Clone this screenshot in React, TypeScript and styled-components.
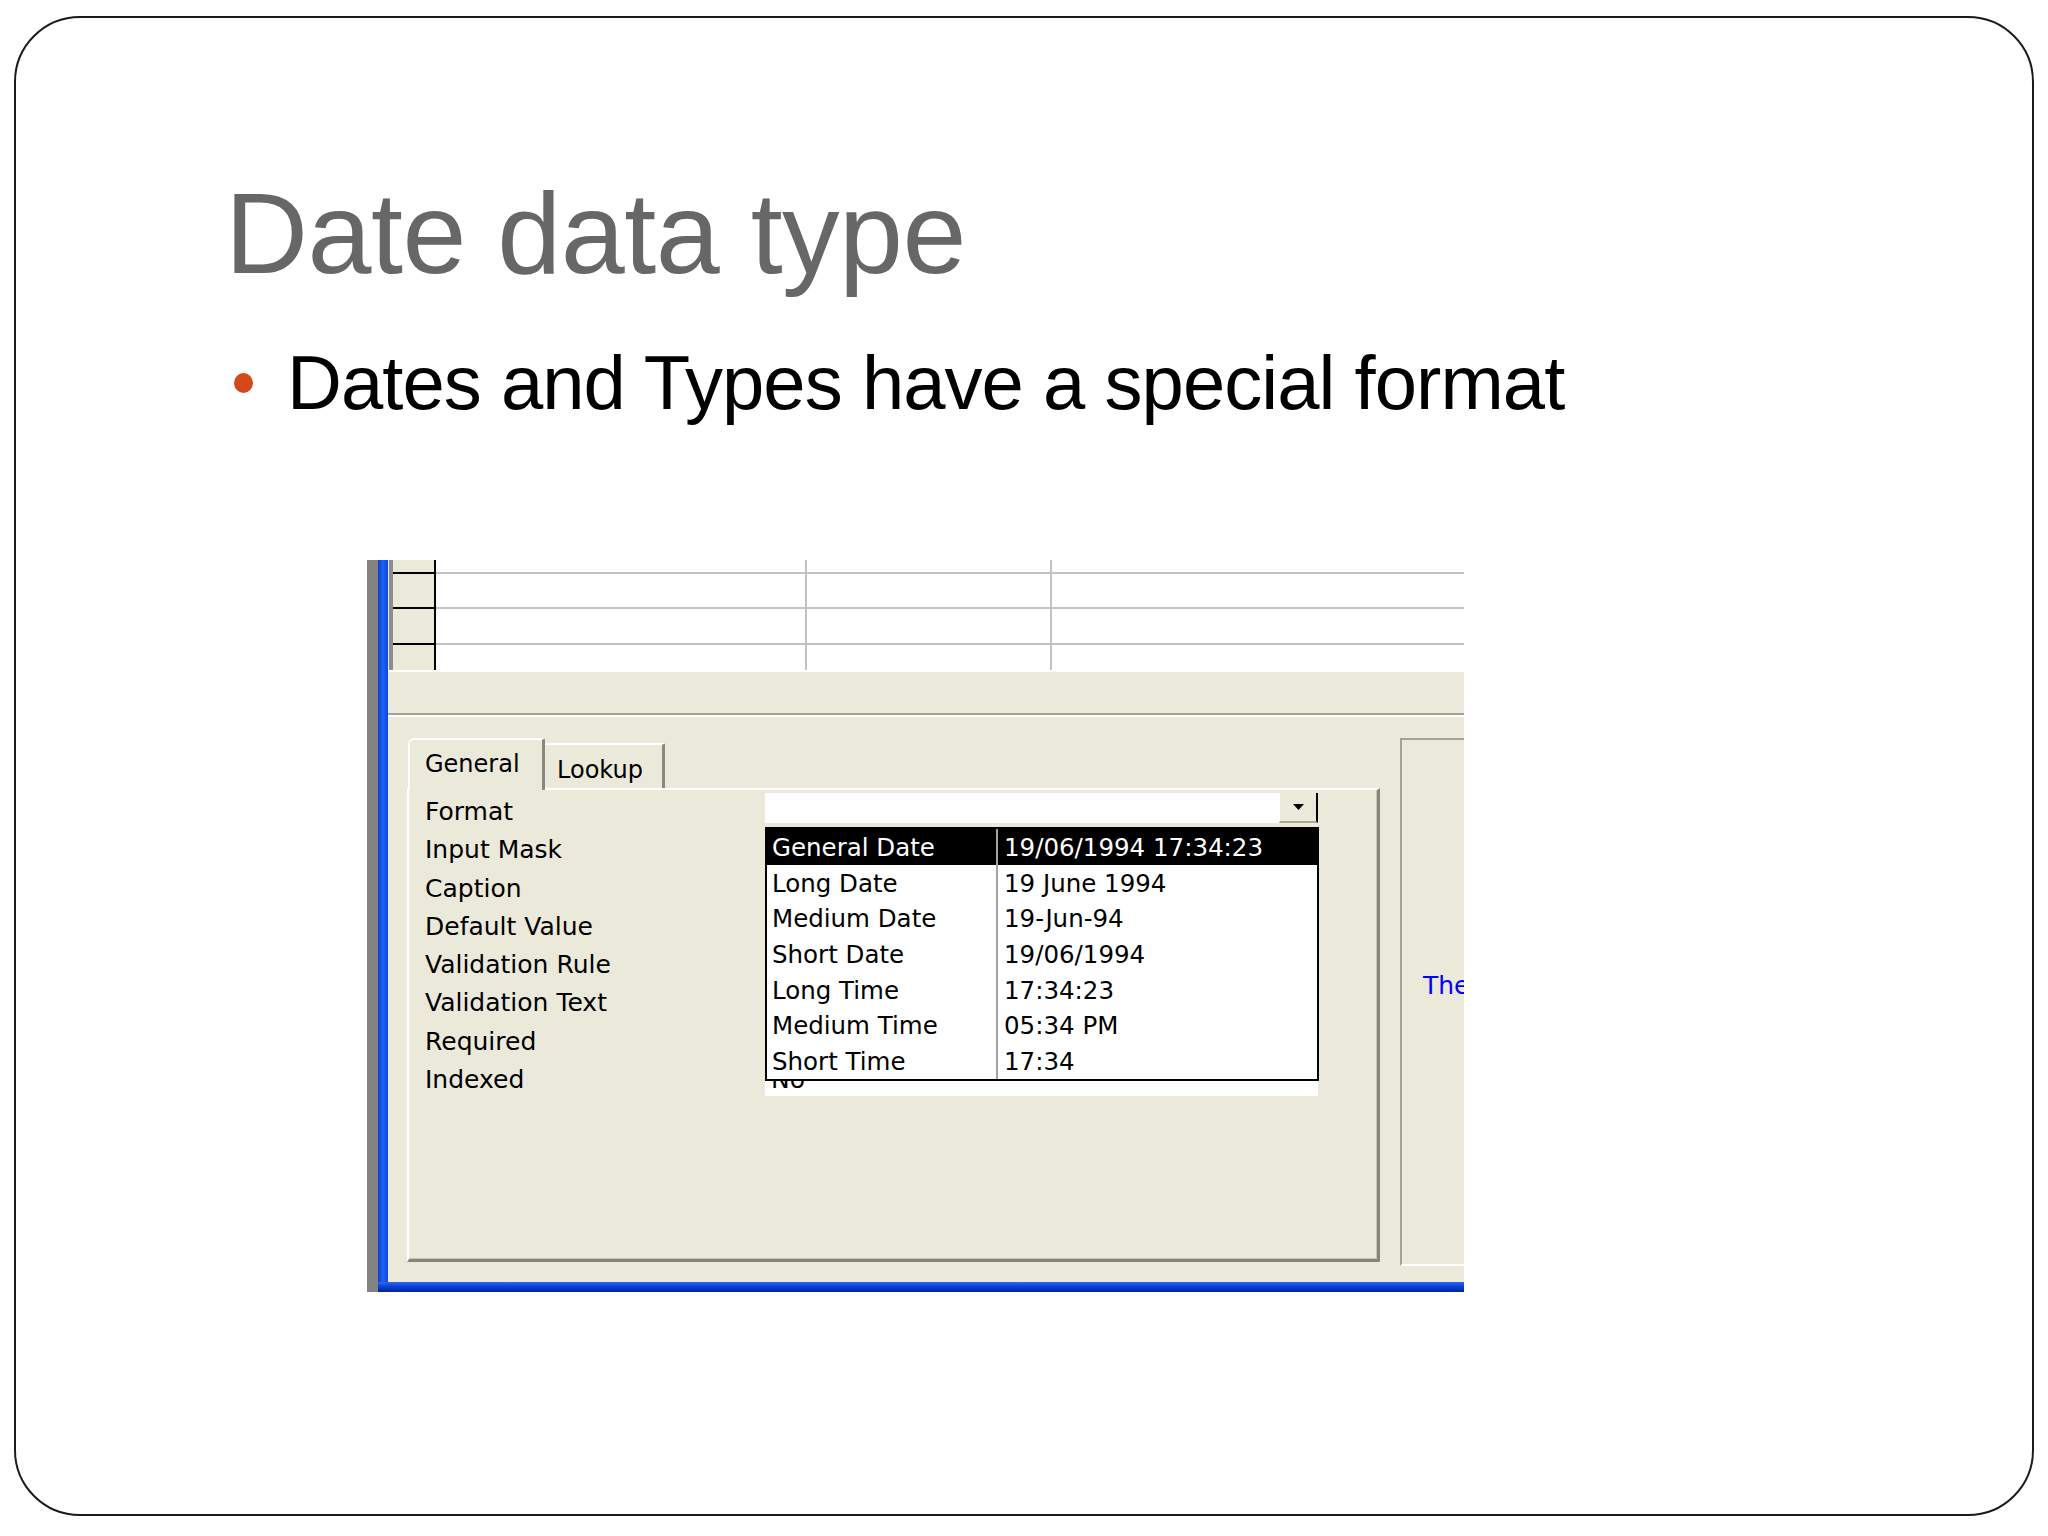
import React from "react";
import styled, { createGlobalStyle } from "styled-components";

const Global = createGlobalStyle`
  html, body {
    margin: 0;
    padding: 0;
    background: #ffffff;
  }
  body {
    width: 2048px;
    height: 1536px;
    overflow: hidden;
  }
  * { box-sizing: border-box; }
`;

const Slide = styled.div`
  margin: 16px 14px 0 14px;
  width: 2020px;
  height: 1500px;
  border: 2px solid #1b1b1b;
  border-radius: 66px;
  background: #ffffff;
  padding: 158px 0 0 201px;
  display: flex;
  flex-direction: column;
`;

const Title = styled.h1`
  margin: 0 0 0 8px;
  font-family: "Liberation Sans", Arial, sans-serif;
  font-weight: 400;
  font-size: 115px;
  line-height: 115px;
  color: #676767;
  letter-spacing: -0.5px;
`;

const BulletRow = styled.div`
  margin-top: 55px;
  padding-left: 17px;
  display: flex;
  align-items: center;
  gap: 34px;
`;

const Dot = styled.span`
  width: 19px;
  height: 20px;
  border-radius: 50%;
  background: #d4491a;
  flex: none;
`;

const BulletText = styled.p`
  margin: 0;
  font-family: "Liberation Sans", Arial, sans-serif;
  font-size: 76px;
  line-height: 74px;
  letter-spacing: -0.95px;
  color: #000;
`;

const Screenshot = styled.div`
  margin: 140px 0 0 150px;
  width: 1097px;
  height: 732px;
  display: flex;
  overflow: hidden;
  font-family: "DejaVu Sans", Verdana, sans-serif;
`;

const GrayEdge = styled.div`
  width: 11px;
  flex: none;
  background: #838383;
`;

const Window = styled.div`
  flex: 1;
  min-width: 0;
  display: flex;
  flex-direction: column;
`;

const WindowBody = styled.div`
  flex: 1;
  min-height: 0;
  display: flex;
`;

const BlueEdge = styled.div`
  width: 10px;
  flex: none;
  background: linear-gradient(to right, #0a3ccc, #1f62f2 50%, #0b46da);
`;

const BottomBand = styled.div`
  height: 10px;
  flex: none;
  background: linear-gradient(to bottom, #2c68f2, #0b42d6 45%, #00259a);
`;

const Inner = styled.div`
  flex: 1;
  min-width: 0;
  display: flex;
  flex-direction: column;
  background: #ebe9da;
`;

const DataGrid = styled.div`
  height: 110px;
  flex: none;
  margin-left: 1px;
  border-left: 4px solid #8d8d8d;
  display: flex;
  flex-direction: column;
`;

const GridRow = styled.div<{ $h: number }>`
  height: ${(p) => p.$h}px;
  flex: none;
  display: flex;
`;

const HeaderCell = styled.div<{ $last?: boolean }>`
  width: 43px;
  flex: none;
  background: #ebe9da;
  border-right: 2px solid #000;
  border-bottom: ${(p) => (p.$last ? "none" : "2px solid #000")};
`;

const DataCell = styled.div<{ $w?: number; $last?: boolean; $end?: boolean }>`
  ${(p) => (p.$w ? `width: ${p.$w}px; flex: none;` : "flex: 1;")}
  background: #ffffff;
  border-right: ${(p) => (p.$end ? "none" : "2px solid #c2c2c2")};
  border-bottom: ${(p) => (p.$last ? "none" : "2px solid #c2c2c2")};
`;

const Splitter = styled.div`
  height: 45px;
  flex: none;
  border-top: 2px solid #ffffff;
  border-bottom: 2px solid #a3a297;
`;

const DesignArea = styled.div`
  flex: 1;
  min-height: 0;
  border-top: 2px solid #ffffff;
  padding: 21px 0 20px 19px;
  display: flex;
`;

const TabColumn = styled.div`
  width: 973px;
  flex: none;
  display: flex;
  flex-direction: column;
`;

const TabStrip = styled.div`
  height: 50px;
  flex: none;
  display: flex;
  align-items: flex-end;
  padding-left: 1px;
  position: relative;
  z-index: 1;
`;

const Tab = styled.div<{ $active?: boolean }>`
  height: ${(p) => (p.$active ? 52 : 45)}px;
  width: ${(p) => (p.$active ? 137 : 120)}px;
  margin-bottom: ${(p) => (p.$active ? -2 : 0)}px;
  background: #ebe9da;
  border-top: 2px solid #ffffff;
  border-left: ${(p) => (p.$active ? "2px solid #ffffff" : "none")};
  border-right: 3px solid #8a897c;
  border-top-left-radius: ${(p) => (p.$active ? 6 : 2)}px;
  border-top-right-radius: 2px;
  padding: ${(p) => (p.$active ? "10px 0 0 15px" : "11px 0 0 12px")};
  font-size: 24px;
  line-height: 28px;
  color: #000;
`;

const TabPanel = styled.div`
  flex: 1;
  border-top: 2px solid #ffffff;
  border-left: 2px solid #ffffff;
  border-right: 3px solid #86857a;
  border-bottom: 3px solid #86857a;
  box-shadow: inset -1px -1px 0 #c6c5b6;
  padding: 3px 0 0 16px;
  display: flex;
  flex-direction: column;
`;

const PropRow = styled.div`
  height: 38.3px;
  flex: none;
  display: flex;
  align-items: flex-start;
`;

const PropLabel = styled.div`
  width: 340px;
  flex: none;
  font-size: 25px;
  line-height: 38.3px;
  color: #000;
  white-space: nowrap;
`;

const ValueField = styled.div<{ $h: number }>`
  position: relative;
  width: 553px;
  height: ${(p) => p.$h}px;
  margin-top: 0px;
  background: #ffffff;
  display: flex;
  justify-content: flex-end;
`;

const FieldText = styled.span`
  flex: 1;
  padding-left: 6px;
  font-size: 25px;
  line-height: 38px;
  color: #000;
`;

const DropButton = styled.div`
  width: 39px;
  height: 30px;
  background: #ebe9da;
  border-left: 1px solid #ffffff;
  border-right: 2px solid #000;
  border-bottom: 2px solid #a9a89b;
  display: flex;
  align-items: center;
  justify-content: center;
`;

const DropList = styled.div`
  position: absolute;
  top: 34px;
  left: 0;
  width: 554px;
  height: 254px;
  border: 2px solid #000;
  background: #ffffff;
  z-index: 2;
  display: flex;
  flex-direction: column;
`;

const ListRow = styled.div<{ $selected?: boolean }>`
  height: 35.7px;
  flex: none;
  display: grid;
  grid-template-columns: 231px 1fr;
  background: ${(p) => (p.$selected ? "#000" : "#fff")};
  color: ${(p) => (p.$selected ? "#fff" : "#000")};
  font-size: 24.5px;
  line-height: 33.7px;
  white-space: nowrap;
`;

const ListName = styled.span`
  padding: 2px 0 0 5px;
  border-right: 2px solid #a2a2a2;
`;

const ListSample = styled.span`
  padding: 2px 0 0 6px;
`;

const InfoBox = styled.div`
  flex: 1;
  margin-left: 20px;
  margin-bottom: -4px;
  border-top: 2px solid #a3a296;
  border-left: 2px solid #a3a296;
  border-bottom: 2px solid #ffffff;
  padding: 0 0 34px 21px;
  display: flex;
  align-items: center;
  overflow: hidden;
`;

const InfoText = styled.span`
  font-size: 25px;
  color: #0000ff;
  white-space: nowrap;
`;

const labels = [
  "Format",
  "Input Mask",
  "Caption",
  "Default Value",
  "Validation Rule",
  "Validation Text",
  "Required",
  "Indexed",
];

const formats: [string, string][] = [
  ["General Date", "19/06/1994 17:34:23"],
  ["Long Date", "19 June 1994"],
  ["Medium Date", "19-Jun-94"],
  ["Short Date", "19/06/1994"],
  ["Long Time", "17:34:23"],
  ["Medium Time", "05:34 PM"],
  ["Short Time", "17:34"],
];

const gridRows = [14, 35, 36, 25];

export default function App() {
  return (
    <>
      <Global />
      <Slide>
        <Title>Date data type</Title>
        <BulletRow>
          <Dot />
          <BulletText>Dates and Types have a special format</BulletText>
        </BulletRow>
        <Screenshot>
          <GrayEdge />
          <Window>
            <WindowBody>
              <BlueEdge />
              <Inner>
                <DataGrid>
                  {gridRows.map((h, i) => {
                    const last = i === gridRows.length - 1;
                    return (
                      <GridRow key={i} $h={h}>
                        <HeaderCell $last={last} />
                        <DataCell $w={371} $last={last} />
                        <DataCell $w={245} $last={last} />
                        <DataCell $last={last} $end />
                      </GridRow>
                    );
                  })}
                </DataGrid>
                <Splitter />
                <DesignArea>
                  <TabColumn>
                    <TabStrip>
                      <Tab $active>General</Tab>
                      <Tab>Lookup</Tab>
                    </TabStrip>
                    <TabPanel>
                      {labels.map((label, i) => (
                        <PropRow key={label}>
                          <PropLabel>{label}</PropLabel>
                          {i === 0 && (
                            <ValueField $h={30}>
                              <DropButton>
                                <svg width="11" height="6" viewBox="0 0 11 6">
                                  <path d="M0 0 H11 L5.5 6 Z" fill="#000" />
                                </svg>
                              </DropButton>
                              <DropList>
                                {formats.map(([name, sample], j) => (
                                  <ListRow key={name} $selected={j === 0}>
                                    <ListName>{name}</ListName>
                                    <ListSample>{sample}</ListSample>
                                  </ListRow>
                                ))}
                              </DropList>
                            </ValueField>
                          )}
                          {i === labels.length - 1 && (
                            <ValueField $h={35}>
                              <FieldText>No</FieldText>
                            </ValueField>
                          )}
                        </PropRow>
                      ))}
                    </TabPanel>
                  </TabColumn>
                  <InfoBox>
                    <InfoText>The display layout for the field.</InfoText>
                  </InfoBox>
                </DesignArea>
              </Inner>
            </WindowBody>
            <BottomBand />
          </Window>
        </Screenshot>
      </Slide>
    </>
  );
}
